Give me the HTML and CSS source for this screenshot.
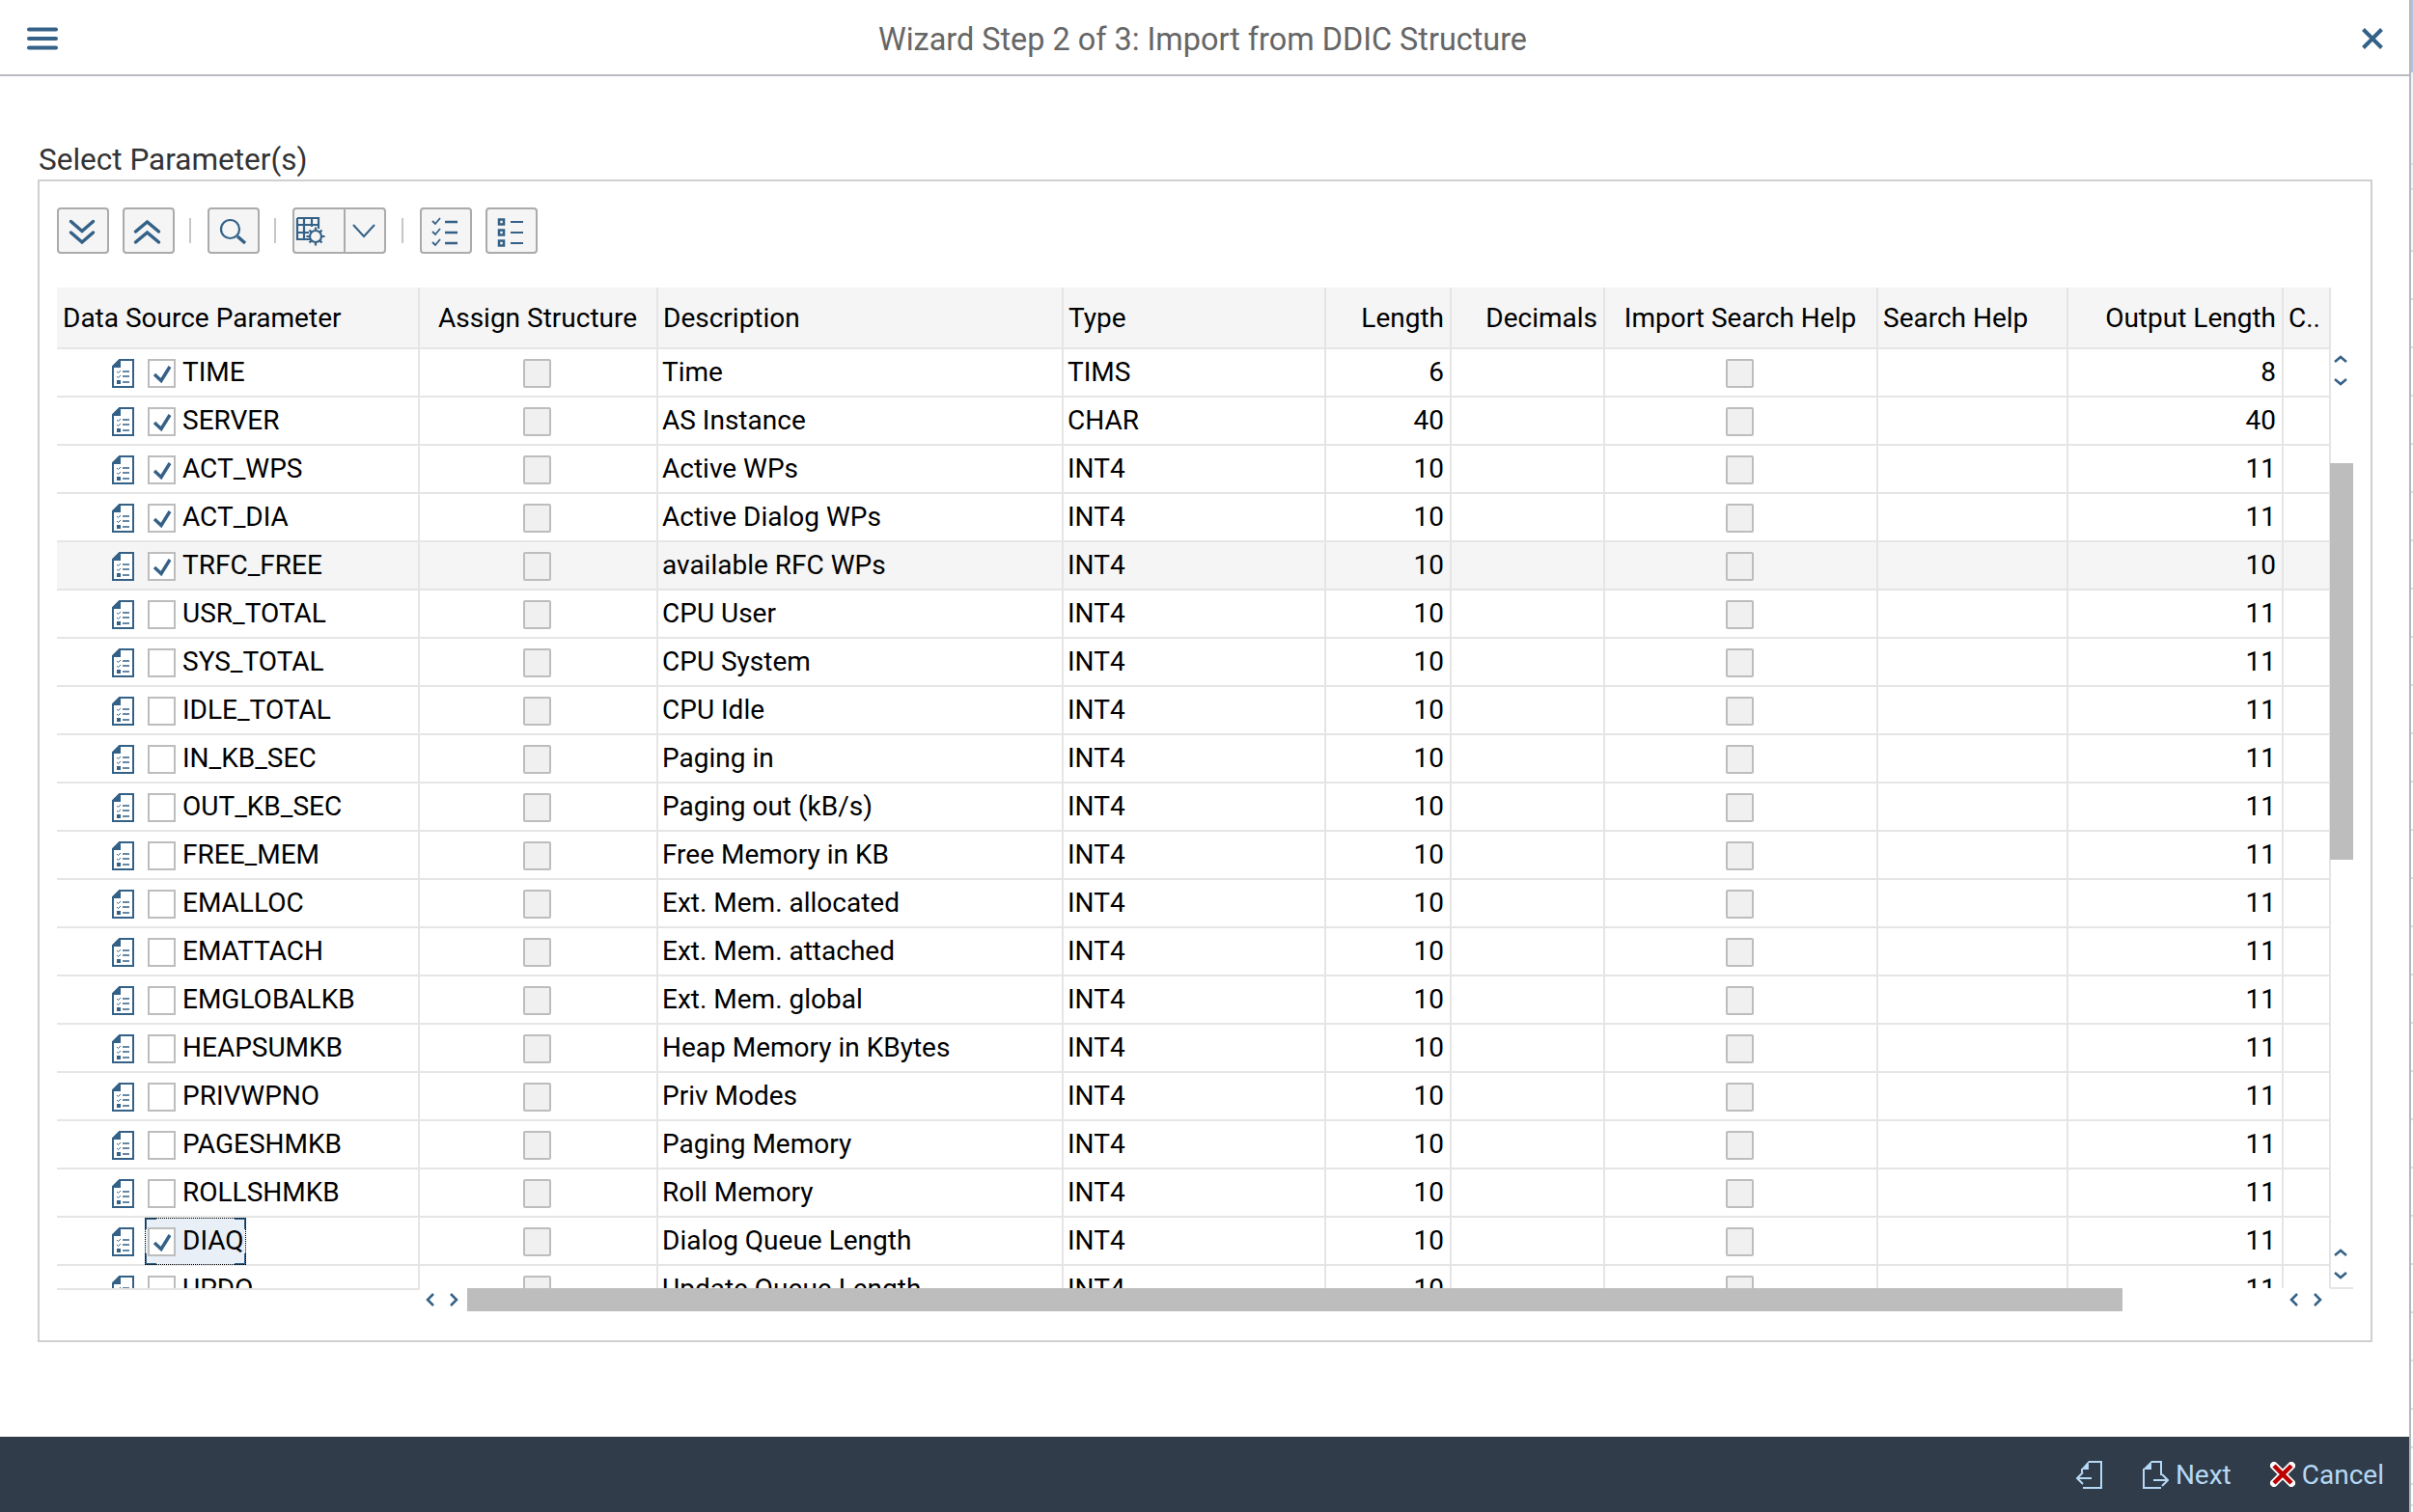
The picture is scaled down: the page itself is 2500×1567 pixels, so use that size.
FILE: index.html
```html
<!DOCTYPE html>
<html lang="en">
<head>
<meta charset="utf-8">
<title>Wizard Step 2 of 3: Import from DDIC Structure</title>
<link rel="stylesheet" href="styles.css">
</head>
<body>
<svg class="defs" width="0" height="0" aria-hidden="true">
  <symbol id="doc" viewBox="0 0 23 30">
    <path d="M8 1H22V29H1V8Z" fill="#fff" stroke="#346187" stroke-width="2"/>
    <path d="M1 8L8 1V8Z" fill="#346187" stroke="#346187" stroke-width="2"/>
    <path d="M5 13l1.500 1.500L9 12M5 18l1.500 1.500L9 17" fill="none" stroke="#346187" stroke-width="1"/>
    <path d="M11 13h7M11 18h7M11 24h7" stroke="#346187" stroke-width="1.500"/>
    <rect x="5" y="22" width="4" height="4" fill="#346187"/>
  </symbol>
  <symbol id="check" viewBox="0 0 25 26">
    <path d="M5 14L12 20.500L21 6" fill="none" stroke="#346187" stroke-width="3.400"/>
  </symbol>
</svg>
<div class="screen">
  <div class="dialog">
    <header class="titlebar">
      <svg class="menu-ico" viewBox="0 0 32 24"><path d="M2 2.500h28M2 12h28M2 21.500h28" stroke="#346187" stroke-width="4" stroke-linecap="round"/></svg>
      <h1 class="title">Wizard Step 2 of 3: Import from DDIC Structure</h1>
      <svg class="close-ico" viewBox="0 0 22 22"><path d="M1.500 1.500L20.500 20.500M20.500 1.500L1.500 20.500" stroke="#346187" stroke-width="4"/></svg>
    </header>
    <main class="content">
      <div class="group-title">Select Parameter(s)</div>
      <section class="panel">
        <div class="toolbar">
          <button class="tbtn"><svg viewBox="0 0 50 44"><path d="M12.500 12.500L24 22.500L35.500 12.500M12.500 24L24 34L35.500 24" fill="none" stroke="#346187" stroke-width="3.500" stroke-linecap="round"/></svg></button>
          <button class="tbtn"><svg viewBox="0 0 50 44"><path d="M11.500 23L23.500 13L35.500 23M11.500 34L23.500 24L35.500 34" fill="none" stroke="#346187" stroke-width="3.500" stroke-linecap="round"/></svg></button>
          <span class="tsep"></span>
          <button class="tbtn"><svg viewBox="0 0 50 44"><circle cx="21.500" cy="20.500" r="9.500" fill="none" stroke="#346187" stroke-width="2.200"/><path d="M29 28L37 35" stroke="#346187" stroke-width="3.500"/></svg></button>
          <span class="tsep"></span>
          <div class="split">
            <button class="tbtn-part main"><svg viewBox="0 0 51 44"><path d="M3 9H25V20M18 31H3V9M3 16H25M3 24H15M10 9V31M18 9V18" fill="none" stroke="#346187" stroke-width="2.200"/><path d="M22 18.500v3M22 34.500v3M12.500 28h3M28.500 28h3M15.500 21.500l2 2M26.500 32.500l2 2M28.500 21.500l-2 2M17.500 32.500l-2 2" stroke="#346187" stroke-width="2.200"/><circle cx="22" cy="28" r="6" fill="#f5f5f5" stroke="#346187" stroke-width="2.200"/></svg></button>
            <button class="tbtn-part arrow"><svg viewBox="0 0 40 44"><path d="M8 16L19 28L30 16" fill="none" stroke="#346187" stroke-width="2"/></svg></button>
          </div>
          <span class="tsep"></span>
          <button class="tbtn"><svg viewBox="0 0 50 44"><path d="M11 12l3 3l5-6M11 23l3 3l5-6M11 34l3 3l5-6" fill="none" stroke="#346187" stroke-width="1.800"/><path d="M24 13h13M24 24h13M24 35h13" stroke="#346187" stroke-width="2.500"/></svg></button>
          <button class="tbtn"><svg viewBox="0 0 50 44"><path d="M12 10.500h5v5h-5zM12 21.500h5v5h-5zM12 32.500h5v5h-5z" fill="none" stroke="#346187" stroke-width="2.500"/><path d="M24 13h13M24 24h13M24 35h13" stroke="#346187" stroke-width="2"/></svg></button>
        </div>
        <div class="table-area">
          <div class="table-row-wrap">
            <div class="viewport">
              <table class="grid">
                <colgroup>
                  <col class="c1"><col class="c2"><col class="c3"><col class="c4"><col class="c5"><col class="c6"><col class="c7"><col class="c8"><col class="c9"><col class="c10">
                </colgroup>
                <thead>
                  <tr>
                    <th>Data Source Parameter</th><th class="ctr">Assign Structure</th><th>Description</th><th>Type</th><th class="num">Length</th><th class="num">Decimals</th><th class="ctr">Import Search Help</th><th>Search Help</th><th class="num">Output Length</th><th>C..</th>
                  </tr>
                </thead>
                <tbody id="rows"></tbody>
              </table>
            </div>
            <div class="vscroll">
              <svg class="varrows top" viewBox="0 0 16 32"><path d="M2 7L8 2L14 7M2 25L8 30L14 25" fill="none" stroke="#346187" stroke-width="2.500"/></svg>
              <div class="vthumb"></div>
              <svg class="varrows bottom" viewBox="0 0 16 32"><path d="M2 7L8 2L14 7M2 25L8 30L14 25" fill="none" stroke="#346187" stroke-width="2.500"/></svg>
            </div>
          </div>
          <div class="hscroll">
            <div class="fixed-foot"></div>
            <div class="harrows left"><svg viewBox="0 0 34 14"><path d="M8 1L2 7L8 13M26 1L32 7L26 13" fill="none" stroke="#346187" stroke-width="2.500"/></svg></div>
            <div class="hthumb"></div>
            <div class="harrows right"><svg viewBox="0 0 34 14"><path d="M8 1L2 7L8 13M26 1L32 7L26 13" fill="none" stroke="#346187" stroke-width="2.500"/></svg></div>
          </div>
        </div>
      </section>
    </main>
    <footer class="footer">
      <button class="fbtn"><svg class="f-ico back" viewBox="0 0 28 30"><path d="M14 2H27V29H8M7 9V13" fill="none" stroke="#b5d8f5" stroke-width="2"/><path d="M6 10L14 1V10Z" fill="#b5d8f5"/><path d="M17 19H2M8 13L2 19L8 25" fill="none" stroke="#b5d8f5" stroke-width="2"/></svg></button>
      <button class="fbtn fbtn-next"><svg class="f-ico next" viewBox="0 0 27 30"><path d="M1 9V29H19M9 2H19V16" fill="none" stroke="#b5d8f5" stroke-width="2"/><path d="M0 10L9 1V10Z" fill="#b5d8f5"/><path d="M11 21H25M20 15L26 21L20 27" fill="none" stroke="#b5d8f5" stroke-width="2"/></svg><span>Next</span></button>
      <button class="fbtn"><svg class="f-ico x" viewBox="0 0 26 26"><path d="M4 4L22 22M22 4L4 22" stroke="#fff" stroke-width="8" stroke-linecap="round"/><path d="M4 4L22 22M22 4L4 22" stroke="#bb0000" stroke-width="4.500"/></svg><span>Cancel</span></button>
    </footer>
  </div>
  <div class="backdrop">
    <div class="bd bd-blue"></div>
    <div class="bd bd-a"></div>
    <div class="bd bd-b"></div>
    <div class="bd bd-c"></div>
    <div class="bd bd-rows"></div>
    <div class="bd bd-end1"></div>
    <div class="bd bd-end2"></div>
    <div class="bd bd-end3"></div>
  </div>
</div>
<script src="app.js"></script>
</body>
</html>
```

FILE: app.js
```js
var data = [
  ["TIME", 1, "Time", "TIMS", "6", "8"],
  ["SERVER", 1, "AS Instance", "CHAR", "40", "40"],
  ["ACT_WPS", 1, "Active WPs", "INT4", "10", "11"],
  ["ACT_DIA", 1, "Active Dialog WPs", "INT4", "10", "11"],
  ["TRFC_FREE", 1, "available RFC WPs", "INT4", "10", "10"],
  ["USR_TOTAL", 0, "CPU User", "INT4", "10", "11"],
  ["SYS_TOTAL", 0, "CPU System", "INT4", "10", "11"],
  ["IDLE_TOTAL", 0, "CPU Idle", "INT4", "10", "11"],
  ["IN_KB_SEC", 0, "Paging in", "INT4", "10", "11"],
  ["OUT_KB_SEC", 0, "Paging out (kB/s)", "INT4", "10", "11"],
  ["FREE_MEM", 0, "Free Memory in KB", "INT4", "10", "11"],
  ["EMALLOC", 0, "Ext. Mem. allocated", "INT4", "10", "11"],
  ["EMATTACH", 0, "Ext. Mem. attached", "INT4", "10", "11"],
  ["EMGLOBALKB", 0, "Ext. Mem. global", "INT4", "10", "11"],
  ["HEAPSUMKB", 0, "Heap Memory in KBytes", "INT4", "10", "11"],
  ["PRIVWPNO", 0, "Priv Modes", "INT4", "10", "11"],
  ["PAGESHMKB", 0, "Paging Memory", "INT4", "10", "11"],
  ["ROLLSHMKB", 0, "Roll Memory", "INT4", "10", "11"],
  ["DIAQ", 1, "Dialog Queue Length", "INT4", "10", "11"],
  ["UPDQ", 0, "Update Queue Length", "INT4", "10", "11"]
];
var box = '<span class="cbox off"></span>';
document.getElementById("rows").innerHTML = data.map(function (r, i) {
  var chk = '<span class="cbox">' + (r[1] ? '<svg viewBox="0 0 25 26"><use href="#check"/></svg>' : '') + '</span>';
  var cls = i === 4 ? ' class="hover"' : '';
  var inner = '<div class="cell"><svg class="doc"><use href="#doc"/></svg><span class="name' + (i === 18 ? ' focus' : '') + '">' + chk + '<span class="label">' + r[0] + '</span></span></div>';
  return '<tr' + cls + '><td class="first">' + inner + '</td><td class="ctr">' + box + '</td><td>' + r[2] + '</td><td>' + r[3] +
    '</td><td class="num">' + r[4] + '</td><td></td><td class="ctr">' + box + '</td><td></td><td class="num">' + r[5] + '</td><td></td></tr>';
}).join("");
```

FILE: styles.css
```css
* { box-sizing: border-box; }
html, body { margin: 0; padding: 0; height: 100%; overflow: hidden; background: #fff; }
body { font-family: Roboto, "Noto Sans", sans-serif; color: #000; }
.defs { position: absolute; }
button { font: inherit; padding: 0; margin: 0; }

.screen { display: flex; height: 1567px; width: 2500px; }
.dialog { width: 2496px; flex: none; display: flex; flex-direction: column; }
.backdrop { flex: 1; display: flex; flex-direction: column; border-left: 2px solid #b4b8bc; }
.bd { flex: none; }
.bd-blue { height: 75px; background: #a9c6e2; }
.bd-a { height: 96px; background: #f0f4f9; border-bottom: 2px solid #dde1e5; }
.bd-b { height: 26px; background: #f0f4f9; border-bottom: 2px solid #dde1e5; }
.bd-c { height: 64px; background: #f7f7f7; border-bottom: 2px solid #dddddd; }
.bd-rows { height: 1200px; background: repeating-linear-gradient(#fff 0, #fff 48px, #ddd 48px, #ddd 50px); }
.bd-end1 { height: 40px; border-bottom: 2px solid #ddd; }
.bd-end2 { height: 38px; border-bottom: 2px solid #ddd; }
.bd-end3 { height: 22px; border-bottom: 2px solid #ddd; }

.titlebar { height: 79px; flex: none; display: flex; align-items: center; padding: 3px 27px 0 28px; border-bottom: 2px solid #b8bcc0; }
.menu-ico { width: 32px; height: 24px; flex: none; }
.title { flex: 1; margin: 2px 0 0; text-align: center; font-size: 32.4px; font-weight: 400; color: #666; padding-right: 15px; }
.close-ico { width: 22px; height: 22px; flex: none; }

.content { flex: 1; padding: 63px 38px 0 39px; display: flex; flex-direction: column; }
.group-title { height: 44px; flex: none; font-size: 31.5px; line-height: 48px; color: #333; padding-left: 1px; }
.panel { height: 1205px; flex: none; border: 2px solid #d0d0d0; padding: 27px 0 0 18px; display: flex; flex-direction: column; }

.toolbar { display: flex; align-items: center; height: 48px; flex: none; }
.tbtn, .split { height: 48px; border: 2px solid #ababab; border-radius: 4px; background: #f5f5f5; display: flex; }
.tbtn { width: 54px; margin-right: 14px; }
.tbtn svg, .tbtn-part svg { display: block; width: 100%; height: 100%; }
.tsep { width: 2px; height: 26px; background: #c6c6c6; margin: 0 17px 0 1px; }
.split { width: 97px; margin-right: 15px; }
.tbtn-part { border: 0; background: transparent; height: 100%; }
.tbtn-part.main { width: 53px; border-right: 2px solid #ababab; }
.tbtn-part.arrow { width: 40px; }

.table-area { margin-top: 35px; flex: none; }
.table-row-wrap { display: flex; height: 1037px; }
.viewport { width: 2356px; height: 1037px; overflow: hidden; flex: none; }
.grid { border-collapse: separate; border-spacing: 0; table-layout: fixed; width: 2356px; font-size: 28px; }
.c1 { width: 376px; } .c2 { width: 247px; } .c3 { width: 420px; } .c4 { width: 272px; } .c5 { width: 130px; }
.c6 { width: 159px; } .c7 { width: 283px; } .c8 { width: 197px; } .c9 { width: 223px; } .c10 { width: 49px; }
th { height: 64px; background: #f5f5f5; font-weight: 400; text-align: left; padding: 1px 6px 0 5px; border-right: 2px solid #e5e5e5; border-bottom: 2px solid #e5e5e5; white-space: nowrap; overflow: hidden; }
th:first-child { padding-left: 6px; }
td { height: 50px; padding: 0 6px 2px 4px; border-right: 2px solid #e5e5e5; border-bottom: 2px solid #e5e5e5; white-space: nowrap; overflow: hidden; }
.num { text-align: right; }
.ctr { text-align: center; }
tr.hover td { background: #f5f5f5; }

td.first { padding: 0 0 0 57px; overflow: visible; }
.cell { display: flex; align-items: center; height: 48px; }
.doc { width: 23px; height: 30px; flex: none; margin: 2px 11px 0 0; }
.name { display: flex; align-items: center; gap: 7px; padding: 0 3px; }
.name > .cbox { margin-top: 2px; }
.label { padding-bottom: 2px; }
.name.focus {
  width: 105px; height: 49px; margin-bottom: -1px;
  background-color: #e8eff7;
  background-image:
    linear-gradient(#346187, #346187), linear-gradient(#346187, #346187), linear-gradient(#346187, #346187), linear-gradient(#346187, #346187),
    linear-gradient(#346187, #346187), linear-gradient(#346187, #346187), linear-gradient(#346187, #346187), linear-gradient(#346187, #346187);
  background-repeat: no-repeat;
  background-size: 12px 2px, 2px 12px, 12px 2px, 2px 12px, 12px 2px, 2px 12px, 12px 2px, 2px 12px;
  background-position: left top, left top, right top, right top, left bottom, left bottom, right bottom, right bottom;
  outline: 1px dotted #000;
  outline-offset: -1px;
}
.name.focus > .cbox { margin: 2px 0 1px; }
.cbox { display: block; width: 29px; height: 30px; border: 2px solid #bdbdbd; background: #fff; flex: none; }
.cbox svg { display: block; width: 25px; height: 26px; }
.cbox.off { background: #f0f0f0; border-radius: 2px; margin: 4px auto 0; }

.vscroll { width: 24px; flex: none; display: flex; flex-direction: column; margin-left: -1px; height: 1038px; border-bottom: 2px solid #e5e5e5; }
.varrows { display: block; flex: none; width: 16px; height: 32px; margin-left: 3px; }
.varrows.top { margin-top: 70px; }
.vthumb { flex: none; height: 411px; width: 24px; background: #bdbdbd; margin-top: 80px; }
.varrows.bottom { margin-top: auto; margin-bottom: 8px; }

.hscroll { display: flex; height: 24px; }
.fixed-foot { width: 376px; height: 2px; background: #e5e5e5; flex: none; }
.harrows { flex: none; }
.harrows.left { width: 49px; padding-left: 6px; }
.hthumb { width: 1715px; height: 24px; background: #bdbdbd; flex: none; }
.harrows.right { margin-left: 173px; width: 34px; }
.harrows svg { display: block; width: 34px; height: 14px; margin-top: 5px; }

.footer { height: 78px; flex: none; background: #303c49; display: flex; justify-content: flex-end; align-items: center; padding-right: 26px; gap: 40px; }
.fbtn { background: none; border: 0; color: #b5d8f5; font-size: 28px; display: flex; align-items: center; gap: 7px; }
.fbtn-next { margin-left: 2px; }
.f-ico { height: 30px; flex: none; }
.f-ico.back { width: 28px; }
.f-ico.next { width: 27px; }
.f-ico.x { width: 26px; height: 26px; }
```
